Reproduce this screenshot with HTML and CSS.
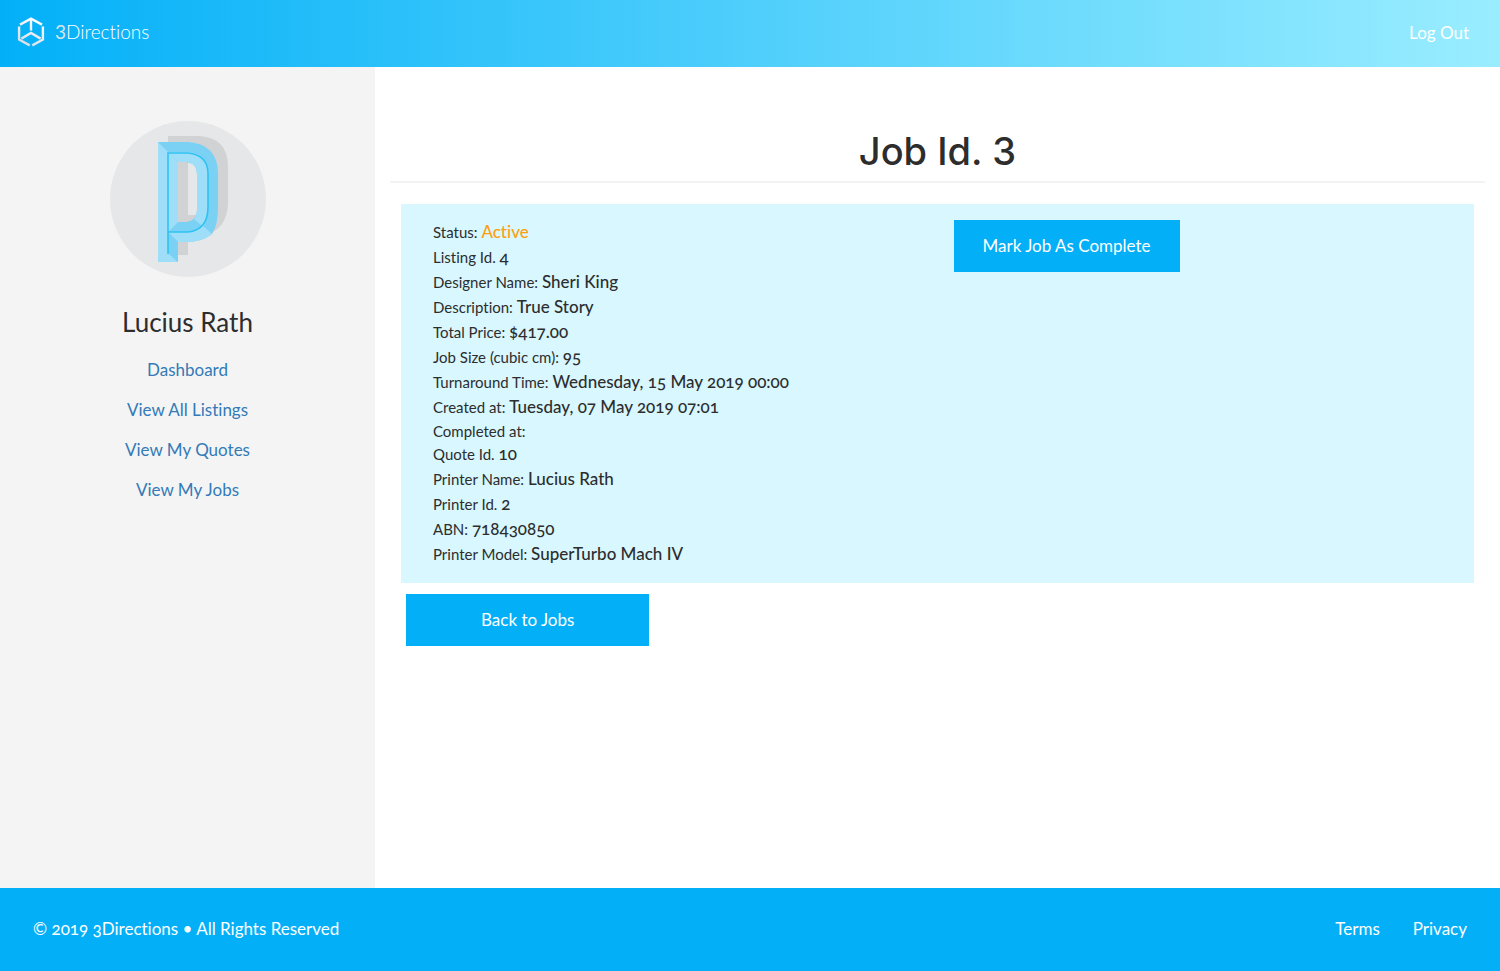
FILE: index.html
```
<!DOCTYPE html>
<html lang="en">
<head>
<meta charset="utf-8">
<title>3Directions – Job Id. 3</title>
<link rel="stylesheet" href="styles.css">
</head>
<body>
<header class="topbar">
  <a class="brand" href="#">
    <svg class="brand-mark" viewBox="0 0 28 30" aria-hidden="true">
      <defs>
        <linearGradient id="silver" gradientUnits="userSpaceOnUse" x1="20" y1="0" x2="6" y2="30">
          <stop offset="0" stop-color="#fff"/>
          <stop offset="1" stop-color="#d3dbe2"/>
        </linearGradient>
      </defs>
      <g fill="none" stroke="url(#silver)" stroke-width="2.4">
        <path d="M3 7.6 14 1.6 25 7.6"/>
        <path d="M14 1.6V13.6"/>
        <path d="M2.1 9.6V22.6L12.7 28.4"/>
        <path d="M25.9 9.6V22.6L15.3 28.4"/>
        <path d="M4.4 21.6 14 16 23.6 21.6"/>
      </g>
    </svg>
    <span class="brand-name"><span class="brand-digit">3</span>Directions</span>
  </a>
  <a class="logout" href="#">Log Out</a>
</header>

<div class="page">
  <aside class="sidebar">
    <svg class="avatar" viewBox="0 0 156 156" role="img" aria-label="Lucius Rath">
      <circle cx="78" cy="78" r="78" fill="#e6e7e8"/>
      <path fill="#d1d2d4" fill-rule="evenodd" d="M58 15H90Q118 17 118 46V80Q118 100 106 109Q98 115 86 115H78V134H58ZM78 42V94H87V42Z"/>
      <path fill="#7ad1f4" fill-rule="evenodd" d="M48 21H78Q108 23 108 53V86Q108 104 102 113Q92 121 76 121H68V141H48ZM68 41V101H76Q87 100 87 88V54Q87 42 76 41Z"/>
      <path fill="#9fdef9" d="M48 21 58 31V132L68 141H48Z"/>
      <path fill="#9fdef9" d="M58 31H78Q98 33 98 53V88H87V54Q87 42 76 41H68Z"/>
      <path fill="#9fdef9" d="M58 111H78Q87 110 93 105L102 113Q92 121 76 121H68Z"/>
      <path fill="#9fdef9" d="M58 31 68 41V101L58 111Z"/>
      <path fill="#9fdef9" d="M84 98Q87 95 87 88H98Q98 99 93 106Z"/>
      <path fill="#7ad1f4" d="M58 111 68 121V141L58 132Z"/>
      <path fill="none" stroke="#2fc2f2" stroke-width="1.6" d="M58 133V32H78Q98 34 98 53V86Q98 109 78 111H58"/>
    </svg>
    <h2 class="user-name">Lucius Rath</h2>
    <nav class="side-nav">
      <a href="#">Dashboard</a>
      <a href="#">View All Listings</a>
      <a href="#">View My Quotes</a>
      <a href="#">View My Jobs</a>
    </nav>
  </aside>

  <main class="content">
    <h1 class="title">Job Id. 3</h1>
    <section class="job">
      <ul class="details">
        <li>Status: <span class="value active">Active</span></li>
        <li>Listing Id. <span class="value">4</span></li>
        <li>Designer Name: <span class="value">Sheri King</span></li>
        <li>Description: <span class="value">True Story</span></li>
        <li>Total Price: <span class="value">$417.00</span></li>
        <li>Job Size (cubic cm): <span class="value">95</span></li>
        <li>Turnaround Time: <span class="value">Wednesday, 15 May 2019 00:00</span></li>
        <li>Created at: <span class="value">Tuesday, 07 May 2019 07:01</span></li>
        <li class="empty">Completed at:</li>
        <li>Quote Id. <span class="value">10</span></li>
        <li>Printer Name: <span class="value">Lucius Rath</span></li>
        <li>Printer Id. <span class="value">2</span></li>
        <li>ABN: <span class="value">718430850</span></li>
        <li>Printer Model: <span class="value">SuperTurbo Mach IV</span></li>
      </ul>
      <div class="actions">
        <button class="btn" type="button">Mark Job As Complete</button>
      </div>
    </section>
    <a class="btn btn-back" href="#">Back to Jobs</a>
  </main>
</div>

<footer class="footer">
  <p class="copyright">© 2019 3Directions • All Rights Reserved</p>
  <nav class="footer-nav">
    <a href="#">Terms</a>
    <a href="#">Privacy</a>
  </nav>
</footer>
</body>
</html>
```
FILE: styles.css
```
* {
  box-sizing: border-box;
}

body {
  margin: 0;
  min-height: 100vh;
  display: flex;
  flex-direction: column;
  font-family: Lato, "Open Sans", sans-serif;
  font-size: 17px;
  font-variant-ligatures: none;
  font-variant-numeric: oldstyle-nums;
  line-height: 24px;
  color: #2d2d2d;
  background: #fff;
}

a {
  text-decoration: none;
}

.topbar {
  display: flex;
  align-items: center;
  justify-content: space-between;
  height: 67px;
  padding: 0 31px 2px 17px;
  background: linear-gradient(90deg, #03b0f8, #9aedff);
}

.brand {
  display: flex;
  align-items: center;
  gap: 10px;
  padding-bottom: 2px;
  color: #fff;
}

.brand-mark {
  width: 28px;
  height: 30px;
}

.brand-name {
  font-size: 19px;
  font-weight: 300;
  font-variant-numeric: lining-nums;
}

.brand-digit {
  color: #d8e2ea;
  font-weight: 400;
}

.logout {
  color: #fff;
}

.page {
  flex: 1;
  display: flex;
}

.sidebar {
  width: 25%;
  display: flex;
  flex-direction: column;
  align-items: center;
  padding-top: 54px;
  background: #f4f4f4;
}

.avatar {
  width: 156px;
  height: 156px;
}

.user-name {
  margin: 29px 0 20px;
  font-size: 26px;
  font-weight: 400;
  line-height: 32px;
}

.side-nav {
  display: flex;
  flex-direction: column;
  align-items: center;
  gap: 16px;
}

.side-nav a {
  color: #337ab7;
}

.content {
  flex: 1;
  padding: 60px 15px 0;
}

.title {
  margin: 0 0 21px;
  padding-bottom: 6px;
  border-bottom: 2px solid #f3f3f3;
  font-family: Inter, sans-serif;
  font-size: 38px;
  font-weight: 500;
  line-height: 48px;
  text-align: center;
}

.job {
  display: flex;
  margin: 0 11px 11px;
  padding: 16px 0;
  background: #d8f7ff;
}

.details {
  width: 50%;
  margin: 0;
  padding: 0 0 0 32px;
  list-style: none;
  font-size: 15px;
  line-height: 25px;
}

.empty {
  line-height: 22px;
}

.value {
  font-size: 17px;
  font-weight: 500;
  line-height: 20px;
}

.active {
  color: #ff9f0f;
}

.actions {
  padding-left: 16px;
}

.btn {
  display: inline-block;
  height: 52px;
  padding: 0 29px;
  border: 0;
  background: #03b0f8;
  color: #fff;
  font: inherit;
  line-height: 52px;
  text-align: center;
}

.btn-back {
  margin-left: 16px;
  padding: 0 75px;
}

.footer {
  display: flex;
  align-items: center;
  justify-content: space-between;
  height: 83px;
  padding: 0 33px 2px;
  background: #03b0f8;
  color: #fff;
}

.copyright {
  margin: 0;
}

.footer-nav {
  display: flex;
  gap: 33px;
}

.footer-nav a {
  color: #fff;
}
```
